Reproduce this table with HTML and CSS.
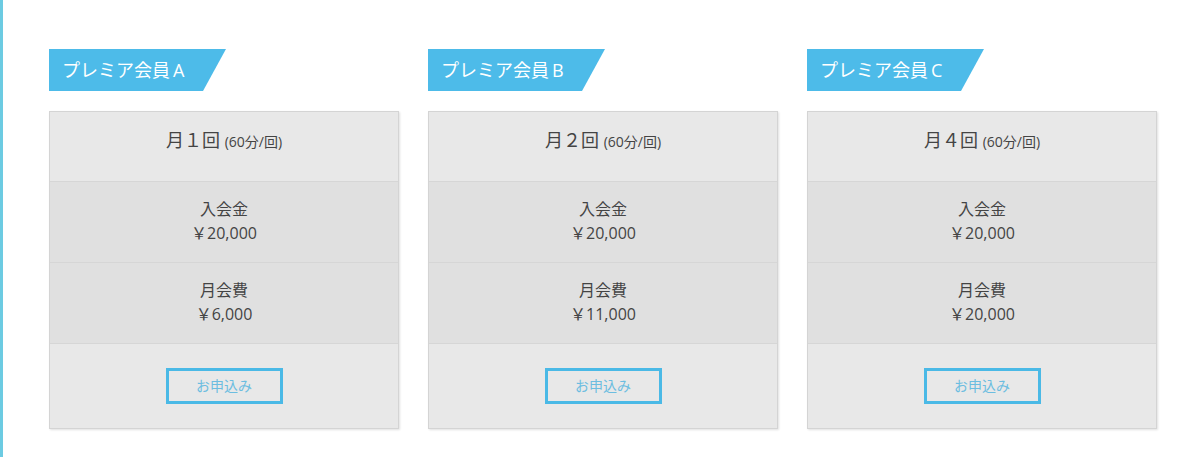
FILE: index.html
```html
<!DOCTYPE html>
<html lang="ja">
<head>
<meta charset="utf-8">
<title>プレミア会員</title>
<link rel="stylesheet" href="styles.css">
</head>
<body>
<div class="page">
  <div class="plans">
    <section class="plan">
      <h2 class="plan-label">プレミア会員&#8201;A</h2>
      <div class="card">
        <div class="row row-head">月１回 <small>(60分/回)</small></div>
        <div class="row row-fee"><span>入会金</span><span>￥20,000</span></div>
        <div class="row row-fee"><span>月会費</span><span>￥6,000</span></div>
        <div class="row row-action"><a class="btn" href="#">お申込み</a></div>
      </div>
    </section>
    <section class="plan">
      <h2 class="plan-label">プレミア会員&#8201;B</h2>
      <div class="card">
        <div class="row row-head">月２回 <small>(60分/回)</small></div>
        <div class="row row-fee"><span>入会金</span><span>￥20,000</span></div>
        <div class="row row-fee"><span>月会費</span><span>￥11,000</span></div>
        <div class="row row-action"><a class="btn" href="#">お申込み</a></div>
      </div>
    </section>
    <section class="plan">
      <h2 class="plan-label">プレミア会員&#8201;C</h2>
      <div class="card">
        <div class="row row-head">月４回 <small>(60分/回)</small></div>
        <div class="row row-fee"><span>入会金</span><span>￥20,000</span></div>
        <div class="row row-fee"><span>月会費</span><span>￥20,000</span></div>
        <div class="row row-action"><a class="btn" href="#">お申込み</a></div>
      </div>
    </section>
  </div>
</div>
</body>
</html>
```
FILE: styles.css
```css
* { box-sizing: border-box; }
html, body { margin: 0; padding: 0; background: #fff; }
body {
  font-family: "Open Sans", "Noto Sans CJK JP", sans-serif;
  color: #444;
  height: 457px;
  overflow: hidden;
}
.page {
  border-left: 3px solid #6ccbe2;
  min-height: 457px;
  padding: 49px 0 0 46px;
}
.plans {
  display: flex;
  gap: 29px;
}
.plan {
  width: 350px;
}
.plan-label {
  margin: 0 0 20px;
  width: 177px;
  height: 42px;
  background: #4dbbe9;
  color: #fff;
  font-size: 18px;
  font-weight: normal;
  line-height: 42px;
  padding-left: 13px;
  white-space: nowrap;
  clip-path: polygon(0 0, 100% 0, calc(100% - 23px) 100%, 0 100%);
}
.card {
  border: 1px solid #d4d4d4;
  box-shadow: 1px 1px 2px rgba(0,0,0,0.12);
  background: #e8e8e8;
}
.row {
  display: flex;
  flex-direction: column;
  align-items: center;
  justify-content: center;
  text-align: center;
  border-top: 1px solid #d6d6d6;
}
.row:first-child { border-top: 0; }
.row-head {
  display: block;
  height: 69px;
  padding-top: 16px;
  font-size: 18px;
  line-height: 24px;
  background: #e8e8e8;
}
.row-head small { font-size: 14px; }
.row-fee {
  height: 81px;
  background: #e0e0e0;
  font-size: 16px;
  line-height: 24px;
  padding-bottom: 2px;
}
.row-action {
  height: 85px;
  background: #e8e8e8;
  padding-bottom: 1px;
}
.btn {
  display: block;
  width: 117px;
  height: 36px;
  border: 3px solid #4ab9e6;
  color: #6cbde0;
  font-size: 14px;
  line-height: 30px;
  text-decoration: none;
  text-align: center;
}
```
